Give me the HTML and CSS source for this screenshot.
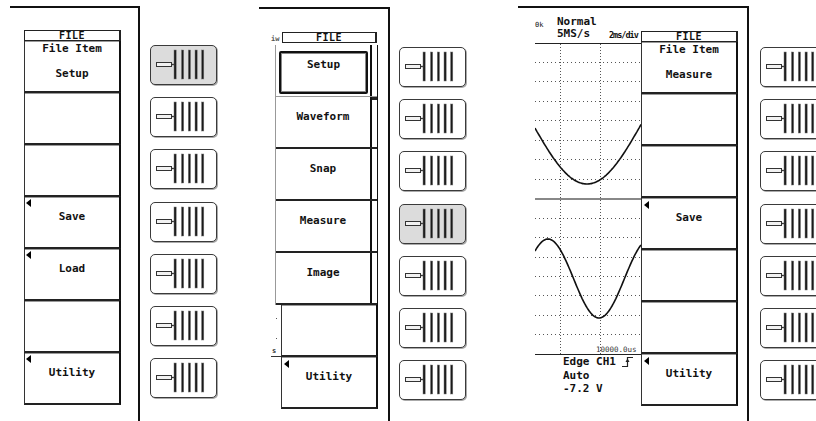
FILE: index.html
```html
<!DOCTYPE html>
<html lang="en">
<head>
    <meta charset="UTF-8">
    <meta name="viewport" content="width=device-width, initial-scale=1.0">
    <title>FILE menu</title>
    <link rel="stylesheet" href="styles.css">
</head>
<body>
    <svg class="defs" width="0" height="0" aria-hidden="true">
        <symbol id="knob" viewBox="0 0 65 38">
            <rect x="5.5" y="16.5" width="15" height="4" fill="#f2f2f2" stroke="#333"/>
            <line x1="20.5" y1="18.5" x2="23" y2="18.5" stroke="#333" stroke-width="1.4"/>
            <rect x="23" y="4" width="2.2" height="29" fill="#1a1a1a" stroke="#777" stroke-width="0.5"/>
            <rect x="30.5" y="4" width="2.2" height="29" fill="#1a1a1a" stroke="#777" stroke-width="0.5"/>
            <rect x="37.3" y="4" width="2.2" height="29" fill="#1a1a1a" stroke="#777" stroke-width="0.5"/>
            <rect x="44" y="4" width="2.2" height="29" fill="#1a1a1a" stroke="#777" stroke-width="0.5"/>
            <rect x="50.6" y="4" width="2.2" height="29" fill="#1a1a1a" stroke="#777" stroke-width="0.5"/>
        </symbol>
        <symbol id="arrow" viewBox="0 0 5 8">
            <polygon points="5,0 0,4 5,8" fill="#000"/>
        </symbol>
    </svg>

    <!-- first screen: item is Setup -->
    <div class="unit u1">
        <div class="screen s1">
            <div class="menu">
                <div class="menu-head">FILE</div>
                <div class="btn item"><div>File Item</div><div class="value">Setup</div></div>
                <div class="btn"></div>
                <div class="btn"></div>
                <div class="btn"><svg class="tri"><use href="#arrow"/></svg>Save</div>
                <div class="btn"><svg class="tri"><use href="#arrow"/></svg>Load</div>
                <div class="btn"></div>
                <div class="btn"><svg class="tri"><use href="#arrow"/></svg>Utility</div>
            </div>
        </div>
        <div class="knobs">
            <div class="knob on"><svg><use href="#knob"/></svg></div>
            <div class="knob"><svg><use href="#knob"/></svg></div>
            <div class="knob"><svg><use href="#knob"/></svg></div>
            <div class="knob"><svg><use href="#knob"/></svg></div>
            <div class="knob"><svg><use href="#knob"/></svg></div>
            <div class="knob"><svg><use href="#knob"/></svg></div>
            <div class="knob"><svg><use href="#knob"/></svg></div>
        </div>
    </div>

    <!-- second screen: item list popped up -->
    <div class="unit u2">
        <div class="screen s2">
            <div class="pop-head">
                <span class="ghost-label">iw</span>
                <div class="menu-head">FILE</div>
            </div>
            <div class="list">
                <div class="row first"><div class="cell"><div class="sel">Setup</div></div><div class="strip"></div></div>
                <div class="row"><div class="cell">Waveform</div><div class="strip thumb"></div></div>
                <div class="row"><div class="cell">Snap</div><div class="strip"></div></div>
                <div class="row"><div class="cell">Measure</div><div class="strip"></div></div>
                <div class="row"><div class="cell">Image</div><div class="strip"></div></div>
            </div>
            <div class="lower">
                <svg class="ghost" width="10" height="103">
                    <rect x="5" y="13" width="1" height="1" fill="#555"/>
                    <rect x="5" y="33" width="1" height="1" fill="#555"/>
                    <text x="1" y="48" font-size="7" fill="#333">s</text>
                    <line x1="0" y1="51.5" x2="10" y2="51.5" stroke="#333"/>
                </svg>
                <div class="menu">
                    <div class="btn"></div>
                    <div class="btn"><svg class="tri big"><use href="#arrow"/></svg>Utility</div>
                </div>
            </div>
        </div>
        <div class="knobs">
            <div class="knob"><svg><use href="#knob"/></svg></div>
            <div class="knob"><svg><use href="#knob"/></svg></div>
            <div class="knob"><svg><use href="#knob"/></svg></div>
            <div class="knob on"><svg><use href="#knob"/></svg></div>
            <div class="knob"><svg><use href="#knob"/></svg></div>
            <div class="knob"><svg><use href="#knob"/></svg></div>
            <div class="knob"><svg><use href="#knob"/></svg></div>
        </div>
    </div>

    <!-- third screen: waveform with item Measure -->
    <div class="unit u3">
        <div class="screen s3">
            <div class="scope">
                <div class="scope-head">
                    <span class="tiny">0k</span><span>Normal</span><span></span>
                    <span></span><span>5MS/s</span><span class="tdiv">2ms/div</span>
                </div>
                <svg class="grid" width="106" height="312">
                    <line x1="0" y1="0.5" x2="106" y2="0.5" stroke="#222"/>
                    <g stroke="#555" stroke-dasharray="1 3">
                        <line x1="0" y1="19.5" x2="106" y2="19.5"/>
                        <line x1="0" y1="38.5" x2="106" y2="38.5"/>
                        <line x1="0" y1="58.5" x2="106" y2="58.5"/>
                        <line x1="0" y1="77.5" x2="106" y2="77.5"/>
                        <line x1="0" y1="97.5" x2="106" y2="97.5"/>
                        <line x1="0" y1="116.5" x2="106" y2="116.5"/>
                        <line x1="0" y1="136.5" x2="106" y2="136.5"/>
                        <line x1="0" y1="175.5" x2="106" y2="175.5"/>
                        <line x1="0" y1="194.5" x2="106" y2="194.5"/>
                        <line x1="0" y1="214.5" x2="106" y2="214.5"/>
                        <line x1="0" y1="233.5" x2="106" y2="233.5"/>
                        <line x1="0" y1="252.5" x2="106" y2="252.5"/>
                        <line x1="0" y1="272.5" x2="106" y2="272.5"/>
                        <line x1="0" y1="291.5" x2="106" y2="291.5"/>
                    </g>
                    <g stroke="#555" stroke-dasharray="1 2">
                        <line x1="25.5" y1="1" x2="25.5" y2="311"/>
                        <line x1="65.5" y1="1" x2="65.5" y2="311"/>
                    </g>
                    <line x1="0" y1="156" x2="106" y2="156" stroke="#888" stroke-width="2"/>
                    <line x1="0" y1="311.5" x2="106" y2="311.5" stroke="#222"/>
                    <polyline id="upper" fill="none" stroke="#111" stroke-width="1.6"/>
                    <polyline id="lower" fill="none" stroke="#111" stroke-width="1.6"/>
                    <text x="61" y="309" font-size="7.5" fill="#333" font-weight="normal">10000.0us</text>
                </svg>
                <div class="trig">
                    <div class="trig-row">Edge CH1
                        <svg class="edge" width="12" height="12">
                            <polyline points="0,10.5 5.5,10.5 5.5,1.5 11,1.5" fill="none" stroke="#222" stroke-width="1.2"/>
                            <polygon points="3.5,6 5.5,2.5 7.5,6" fill="#222"/>
                        </svg>
                    </div>
                    <div>Auto</div>
                    <div>-7.2 V</div>
                </div>
            </div>
            <div class="menu">
                <div class="menu-head">FILE</div>
                <div class="btn item"><div>File Item</div><div class="value">Measure</div></div>
                <div class="btn"></div>
                <div class="btn"></div>
                <div class="btn"><svg class="tri big"><use href="#arrow"/></svg>Save</div>
                <div class="btn"></div>
                <div class="btn"></div>
                <div class="btn"><svg class="tri big"><use href="#arrow"/></svg>Utility</div>
            </div>
        </div>
        <div class="knobs">
            <div class="knob"><svg><use href="#knob"/></svg></div>
            <div class="knob"><svg><use href="#knob"/></svg></div>
            <div class="knob"><svg><use href="#knob"/></svg></div>
            <div class="knob"><svg><use href="#knob"/></svg></div>
            <div class="knob"><svg><use href="#knob"/></svg></div>
            <div class="knob"><svg><use href="#knob"/></svg></div>
            <div class="knob"><svg><use href="#knob"/></svg></div>
        </div>
    </div>

    <script>
        const upper = document.getElementById('upper');
        const lower = document.getElementById('lower');

        function trace(line, fn) {
            const pts = [];
            for (let x = 0; x <= 106; x++) {
                pts.push(x + ',' + fn(x).toFixed(1));
            }
            line.setAttribute('points', pts.join(' '));
        }

        trace(upper, x => 78 + 63 * Math.cos(Math.PI * (x - 52) / 112));
        trace(lower, x => 235.5 - 39.5 * Math.cos(Math.PI * (x - 13) / 51));
    </script>
</body>
</html>
```

FILE: styles.css
```css
body {
    margin: 0;
    width: 816px;
    height: 421px;
    overflow: hidden;
    background: #fff;
    display: flex;
    font-family: 'DejaVu Sans Mono', 'Liberation Mono', monospace;
    font-weight: bold;
    font-size: 11px;
    color: #111;
}
.defs {
    position: absolute;
    width: 0;
    height: 0;
}
.unit {
    display: flex;
    align-items: flex-start;
    flex-shrink: 0;
}
.screen {
    flex-shrink: 0;
    box-sizing: border-box;
    height: 415px;
    border-top: 2px solid #111;
    border-right: 2px solid #111;
}
.s1 {
    width: 130px;
    margin: 6px 0 0 10px;
    padding: 22px 0 0 14px;
}
.s2 {
    width: 131px;
    margin: 7px 0 0 42px;
    padding: 23px 0 0 12px;
}
.s3 {
    width: 231px;
    margin: 6px 0 0 52px;
    padding-left: 17px;
    display: flex;
    align-items: flex-start;
}

/* soft key menu */
.menu {
    width: 97px;
    flex-shrink: 0;
}
.s3 .menu {
    margin-top: 23px;
}
.menu-head {
    height: 11px;
    box-sizing: border-box;
    border: 1px solid #222;
    border-right-width: 2px;
    font-size: 10px;
    line-height: 9px;
    text-align: center;
    letter-spacing: 0.5px;
}
.btn {
    position: relative;
    height: 52px;
    box-sizing: border-box;
    border-left: 1px solid #333;
    border-right: 2px solid #111;
    border-bottom: 2px solid #222;
    box-shadow: inset 0 1px 0 #999;
    padding-top: 13px;
    text-align: center;
    line-height: 13px;
}
.btn.item {
    padding-top: 1px;
}
.btn.item .value {
    margin-top: 12px;
}
/* little arrow: key opens a sub menu */
.tri {
    position: absolute;
    left: 1px;
    top: 2px;
    width: 5px;
    height: 8px;
    display: block;
}
.tri.big {
    left: 2px;
    top: 3px;
}

/* popped up item list */
.pop-head {
    display: flex;
}
.ghost-label {
    width: 11px;
    font-size: 7px;
    line-height: 11px;
    color: #555;
    padding-top: 2px;
}
.s2 .menu-head {
    width: 95px;
}
.list {
    width: 103px;
    margin-left: 4px;
    box-sizing: border-box;
    border-left: 1px solid #999;
    border-right: 1px solid #111;
}
.row {
    display: flex;
    height: 52px;
    box-sizing: border-box;
    border-bottom: 2px solid #222;
}
.row.first {
    border-bottom: 1px solid #999;
}
.cell {
    flex: 1;
    border-right: 2px solid #111;
    padding-top: 13px;
    text-align: center;
    line-height: 13px;
}
.row.first .cell {
    padding: 6px 2px 2px 3px;
}
.sel {
    height: 43px;
    box-sizing: border-box;
    border: 2px solid #111;
    border-radius: 2px;
    box-shadow: inset 0 0 0 1px #888;
    padding-top: 5px;
}
.strip {
    width: 5px;
}
.strip.thumb {
    border-top: 3px solid #222;
    box-sizing: border-box;
    height: 4px;
}
.lower {
    display: flex;
}
.ghost {
    display: block;
    flex-shrink: 0;
}

/* waveform area */
.scope {
    width: 106px;
    flex-shrink: 0;
    overflow: hidden;
}
.scope-head {
    height: 35px;
    box-sizing: border-box;
    padding-top: 8px;
    display: grid;
    grid-template-columns: 22px 52px 32px;
    grid-template-rows: 12px 13px;
    line-height: 12px;
    white-space: nowrap;
}
.tiny {
    font-size: 7px;
    font-weight: normal;
    padding-top: 3px;
}
.tdiv {
    font-size: 8.5px;
    letter-spacing: -1px;
    padding-top: 1px;
}
.grid {
    display: block;
}
.trig {
    padding-left: 28px;
    line-height: 13.5px;
    white-space: nowrap;
}
.trig-row {
    display: flex;
    align-items: center;
    gap: 6px;
}
.edge {
    display: block;
}

/* rotary knobs beside each screen */
.knobs {
    display: flex;
    flex-direction: column;
    gap: 12.2px;
    flex-shrink: 0;
}
.u1 .knobs {
    margin-left: 10px;
    padding-top: 45px;
}
.u2 .knobs {
    margin-left: 9px;
    padding-top: 47px;
}
.u3 .knobs {
    margin-left: 11px;
    padding-top: 47px;
}
.knob {
    width: 67px;
    height: 40px;
    box-sizing: border-box;
    border: 1px solid #3a3a3a;
    border-radius: 5px;
    box-shadow: 1px 1px 0 #aaa;
    background: #fff;
}
.knob.on {
    background: #dcdcdc;
}
.knob svg {
    display: block;
    width: 65px;
    height: 38px;
}
```
